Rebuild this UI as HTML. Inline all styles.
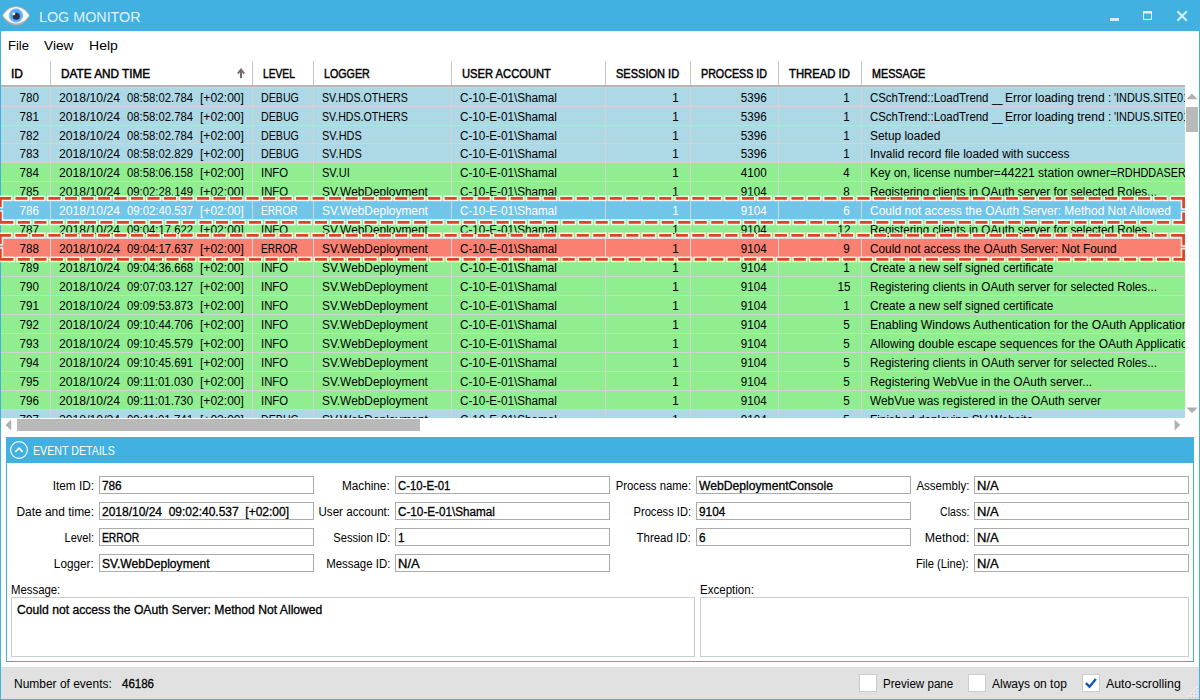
<!DOCTYPE html>
<html lang="en"><head><meta charset="utf-8"><title>Log Monitor</title>
<style>
*{margin:0;padding:0;box-sizing:border-box}
html,body{width:1200px;height:700px;overflow:hidden;background:#fff}
body{font-family:"Liberation Sans",sans-serif;font-size:12px;color:#000}
#win{position:absolute;left:0;top:0;width:1200px;height:700px;background:#fff;overflow:hidden}
#win>*{position:absolute}
.bd{background:#41b1e1;z-index:5}
.x{position:absolute;display:inline-block;white-space:pre;transform-origin:0 0;line-height:14px}
.x.ra{transform-origin:100% 0}
.v,.b{-webkit-text-stroke:0.3px currentColor}
.h{-webkit-text-stroke:0.45px currentColor}
#tb{left:0;top:0;width:1200px;height:31px;background:#41b1e1}
#tb .ttl{left:39px;top:7.5px;font-size:14.7px;color:rgba(255,255,255,.86);line-height:18px}
#tb svg{position:absolute}
#menu{left:1px;top:31px;width:1198px;height:30px}
#menu .x{top:7px;font-size:13.7px;line-height:16px}
#hdr{left:0;top:61px;width:1185px;height:26px;border-bottom:2px solid #b6b6b6;overflow:hidden}
#hdr .h{top:6px;color:#000;margin-left:0.4px}
#hdr .hs{position:absolute;top:0;width:1px;height:24px;background:#c4c4c4}
#hdr .sort{position:absolute;left:235.9px;top:6.6px}
#grid{left:0;top:88px;width:1185px;height:330px;overflow:hidden;background:#d3d3d3}
#hb2{left:0;top:87px;width:1185px;height:1px;background:#d3d3d3;z-index:2}
.r{position:absolute;left:0;width:1185px;overflow:hidden}
.r.d{background:#add8e6}.r.n{background:#90ee90}.r.e{background:#fa8072}.r.s{background:#70c5e9;color:#fff}
.c{top:2.7px}
.c0{right:1145.7px}.c1{left:59px}.c1b{left:127.3px}.c1c{left:199.9px}.c2{left:261px}.c3{left:322px}.c4{left:460px}
.c5{right:506px}.c6{right:418px}.c7{right:335px}.c8{left:870px}
.gs{position:absolute;top:0;width:1px;height:330px;background:#d3d3d3}
#vsb{left:1185px;top:88px;width:14px;height:330px}
#hsb{left:1px;top:417px;width:1198px;height:16px}
#vsb>*,#hsb>*{position:absolute}
.th{background:#b9b9b9}
#ann{left:0;top:190px;pointer-events:none;z-index:6}
#det{left:6px;top:437px;width:1188px;height:225px;border:1px solid #41b1e1;background:#fff}
#det>*{position:absolute}
#det .dh{left:-1px;top:-1px;width:1188px;height:26px;background:#41b1e1}
#det .dh svg{position:absolute}
#det .dt{left:27px;top:6px;color:#fff;font-size:12.3px;line-height:16px}
#det .t{width:215px;height:18px;border:1px solid #ababab;background:#fff;overflow:hidden}
#det .t .v{left:2px;top:2px}
#det .m{border:1px solid #ccc;background:#fff}
#det .m .v{left:5.2px;top:5px}
#sb{left:1px;top:667px;width:1198px;height:32px;background:#e1e1e1}
#sb>*{position:absolute}
#sb .x{top:10px}
#sb .cb{top:7px;width:18px;height:18px;background:#fff;border:1px solid #ccc}
#sb .cb svg{position:absolute;left:0;top:0}

</style></head>
<body>
<div id="win">
<div id="tb">
<svg id="eye" style="left:1px;top:5px" width="30" height="22" viewBox="0 0 30 22">
<defs><radialGradient id="ir" cx="50%" cy="50%" r="50%"><stop offset="0" stop-color="#4f9df0"/><stop offset="0.7" stop-color="#58a8f2"/><stop offset="1" stop-color="#86c8fa"/></radialGradient></defs>
<path d="M0.9 10.6C5 3.6 10 1.3 15 1.3S25.2 3.8 29.1 10.6C25.2 17.4 20 20.4 15 20.4S5 17.4 0.9 10.6Z" fill="#b5b0ac"/>
<path d="M2 10.5C5.8 4.4 10.4 2.2 15 2.2S24.4 4.6 28 10.5C24.4 16 19.6 18.4 15 18.4S5.8 16 2 10.5Z" fill="#fdfdfd"/>
<circle cx="15" cy="10.5" r="7.2" fill="url(#ir)"/>
<circle cx="15.3" cy="11.2" r="3.5" fill="#2a3052"/>
<circle cx="12.8" cy="8.9" r="1.4" fill="#fff"/>
</svg>
<span class="x ttl" style="transform:scaleX(0.9752)">LOG MONITOR</span>
<svg style="left:1108px;top:8px" width="84" height="16" viewBox="0 0 84 16">
<rect x="2" y="10" width="9" height="3" fill="#fff" opacity="0.78"/>
<rect x="35.5" y="4" width="8" height="7.4" fill="none" stroke="#fff" stroke-width="1" opacity="0.85"/><rect x="35" y="3.3" width="9" height="2.2" fill="#fff" opacity="0.8"/>
<path d="M69.4 3.3L78.8 12.8M78.8 3.3L69.4 12.8" stroke="#fff" stroke-width="2" fill="none" opacity="0.8"/>
</svg>
</div>
<div id="menu"><span class="x" style="left:7.199999999999999px;transform:scaleX(0.9487)">File</span><span class="x" style="left:43.1px;transform:scaleX(1.0028)">View</span><span class="x" style="left:88px;transform:scaleX(1.0258)">Help</span></div>
<div id="hdr">
<span class="x h" style="left:11px;transform:scaleX(0.9968)">ID</span><span class="x h" style="left:61px;transform:scaleX(0.9807)">DATE AND TIME</span><span class="x h" style="left:263px;transform:scaleX(0.8520)">LEVEL</span><span class="x h" style="left:324px;transform:scaleX(0.8913)">LOGGER</span><span class="x h" style="left:462px;transform:scaleX(0.9325)">USER ACCOUNT</span><span class="x h" style="left:616px;transform:scaleX(0.9194)">SESSION ID</span><span class="x h" style="left:701px;transform:scaleX(0.8922)">PROCESS ID</span><span class="x h" style="left:789px;transform:scaleX(0.9416)">THREAD ID</span><span class="x h" style="left:872px;transform:scaleX(0.8962)">MESSAGE</span>
<i class="hs" style="left:50px"></i><i class="hs" style="left:252px"></i><i class="hs" style="left:313px"></i><i class="hs" style="left:451px"></i><i class="hs" style="left:605px"></i><i class="hs" style="left:690px"></i><i class="hs" style="left:778px"></i><i class="hs" style="left:861px"></i><svg class="sort" width="10" height="11" viewBox="0 0 10 11"><path d="M5 10.1V2" fill="none" stroke="#7a6a6c" stroke-width="2.1"/><path d="M1.7 5.5Q3.7 3.7 5 1.3Q6.3 3.7 8.3 5.5" fill="none" stroke="#7a6a6c" stroke-width="1.8" stroke-linejoin="round"/></svg>
</div>
<div id="grid">
<div class="r d" style="top:0px;height:18px"><span class="x c c0 ra" style="transform:scaleX(0.9688)">780</span><span class="x c c1" style="transform:scaleX(1.0173)">2018/10/24</span><span class="x c c1b" style="transform:scaleX(0.9421)">08:58:02.784</span><span class="x c c1c" style="transform:scaleX(1.0048)">[+02:00]</span><span class="x c c2" style="transform:scaleX(0.8869)">DEBUG</span><span class="x c c3" style="transform:scaleX(0.8855)">SV.HDS.OTHERS</span><span class="x c c4" style="transform:scaleX(0.9756)">C-10-E-01\Shamal</span><span class="x c c5 ra" style="transform:scaleX(0.9673)">1</span><span class="x c c6 ra" style="transform:scaleX(0.9690)">5396</span><span class="x c c7 ra" style="transform:scaleX(0.9673)">1</span><span class="x c c8"><span class="x" style="left:0.00px;transform:scaleX(0.9514)">CSchTrend::LoadTrend </span><span class="x" style="left:121.65px;transform:scaleX(0.7939)">__ </span><span class="x" style="left:134.89px;transform:scaleX(1.0019)">Error loading trend : </span><span class="x" style="left:244.49px;transform:scaleX(0.9061)">'INDUS.SITE01.TREND'</span></span></div>
<div class="r d" style="top:19px;height:18px"><span class="x c c0 ra" style="transform:scaleX(0.9688)">781</span><span class="x c c1" style="transform:scaleX(1.0173)">2018/10/24</span><span class="x c c1b" style="transform:scaleX(0.9421)">08:58:02.784</span><span class="x c c1c" style="transform:scaleX(1.0048)">[+02:00]</span><span class="x c c2" style="transform:scaleX(0.8869)">DEBUG</span><span class="x c c3" style="transform:scaleX(0.8855)">SV.HDS.OTHERS</span><span class="x c c4" style="transform:scaleX(0.9756)">C-10-E-01\Shamal</span><span class="x c c5 ra" style="transform:scaleX(0.9673)">1</span><span class="x c c6 ra" style="transform:scaleX(0.9690)">5396</span><span class="x c c7 ra" style="transform:scaleX(0.9673)">1</span><span class="x c c8"><span class="x" style="left:0.00px;transform:scaleX(0.9514)">CSchTrend::LoadTrend </span><span class="x" style="left:121.65px;transform:scaleX(0.7939)">__ </span><span class="x" style="left:134.89px;transform:scaleX(1.0019)">Error loading trend : </span><span class="x" style="left:244.49px;transform:scaleX(0.9061)">'INDUS.SITE01.TREND'</span></span></div>
<div class="r d" style="top:38px;height:17px"><span class="x c c0 ra" style="transform:scaleX(0.9688)">782</span><span class="x c c1" style="transform:scaleX(1.0173)">2018/10/24</span><span class="x c c1b" style="transform:scaleX(0.9421)">08:58:02.784</span><span class="x c c1c" style="transform:scaleX(1.0048)">[+02:00]</span><span class="x c c2" style="transform:scaleX(0.8869)">DEBUG</span><span class="x c c3" style="transform:scaleX(0.9120)">SV.HDS</span><span class="x c c4" style="transform:scaleX(0.9756)">C-10-E-01\Shamal</span><span class="x c c5 ra" style="transform:scaleX(0.9673)">1</span><span class="x c c6 ra" style="transform:scaleX(0.9690)">5396</span><span class="x c c7 ra" style="transform:scaleX(0.9673)">1</span><span class="x c c8" style="transform:scaleX(0.9935)">Setup loaded</span></div>
<div class="r d" style="top:56px;height:18px"><span class="x c c0 ra" style="transform:scaleX(0.9688)">783</span><span class="x c c1" style="transform:scaleX(1.0173)">2018/10/24</span><span class="x c c1b" style="transform:scaleX(0.9421)">08:58:02.829</span><span class="x c c1c" style="transform:scaleX(1.0048)">[+02:00]</span><span class="x c c2" style="transform:scaleX(0.8869)">DEBUG</span><span class="x c c3" style="transform:scaleX(0.9120)">SV.HDS</span><span class="x c c4" style="transform:scaleX(0.9756)">C-10-E-01\Shamal</span><span class="x c c5 ra" style="transform:scaleX(0.9673)">1</span><span class="x c c6 ra" style="transform:scaleX(0.9690)">5396</span><span class="x c c7 ra" style="transform:scaleX(0.9673)">1</span><span class="x c c8" style="transform:scaleX(0.9904)">Invalid record file loaded with success</span></div>
<div class="r n" style="top:75px;height:18px"><span class="x c c0 ra" style="transform:scaleX(0.9688)">784</span><span class="x c c1" style="transform:scaleX(1.0173)">2018/10/24</span><span class="x c c1b" style="transform:scaleX(0.9421)">08:58:06.158</span><span class="x c c1c" style="transform:scaleX(1.0048)">[+02:00]</span><span class="x c c2" style="transform:scaleX(0.9441)">INFO</span><span class="x c c3" style="transform:scaleX(0.9212)">SV.UI</span><span class="x c c4" style="transform:scaleX(0.9756)">C-10-E-01\Shamal</span><span class="x c c5 ra" style="transform:scaleX(0.9673)">1</span><span class="x c c6 ra" style="transform:scaleX(0.9690)">4100</span><span class="x c c7 ra" style="transform:scaleX(0.9673)">4</span><span class="x c c8"><span class="x" style="left:0.00px;transform:scaleX(0.9873)">Key on, license number=</span><span class="x" style="left:130.75px;transform:scaleX(1.0089)">44221 station owner=</span><span class="x" style="left:246.86px;transform:scaleX(0.9044)">RDHDDASERV</span></span></div>
<div class="r n" style="top:94px;height:18px"><span class="x c c0 ra" style="transform:scaleX(0.9688)">785</span><span class="x c c1" style="transform:scaleX(1.0173)">2018/10/24</span><span class="x c c1b" style="transform:scaleX(0.9421)">09:02:28.149</span><span class="x c c1c" style="transform:scaleX(1.0048)">[+02:00]</span><span class="x c c2" style="transform:scaleX(0.9441)">INFO</span><span class="x c c3" style="transform:scaleX(0.9924)">SV.WebDeployment</span><span class="x c c4" style="transform:scaleX(0.9756)">C-10-E-01\Shamal</span><span class="x c c5 ra" style="transform:scaleX(0.9673)">1</span><span class="x c c6 ra" style="transform:scaleX(0.9690)">9104</span><span class="x c c7 ra" style="transform:scaleX(0.9673)">8</span><span class="x c c8" style="transform:scaleX(0.9757)">Registering clients in OAuth server for selected Roles...</span></div>
<div class="r s" style="top:113px;height:18px"><span class="x c c0 ra" style="transform:scaleX(0.9688)">786</span><span class="x c c1" style="transform:scaleX(1.0173)">2018/10/24</span><span class="x c c1b" style="transform:scaleX(0.9421)">09:02:40.537</span><span class="x c c1c" style="transform:scaleX(1.0048)">[+02:00]</span><span class="x c c2" style="transform:scaleX(0.8460)">ERROR</span><span class="x c c3" style="transform:scaleX(0.9924)">SV.WebDeployment</span><span class="x c c4" style="transform:scaleX(0.9756)">C-10-E-01\Shamal</span><span class="x c c5 ra" style="transform:scaleX(0.9673)">1</span><span class="x c c6 ra" style="transform:scaleX(0.9690)">9104</span><span class="x c c7 ra" style="transform:scaleX(0.9673)">6</span><span class="x c c8" style="transform:scaleX(0.9979)">Could not access the OAuth Server: Method Not Allowed</span></div>
<div class="r n" style="top:132px;height:18px"><span class="x c c0 ra" style="transform:scaleX(0.9688)">787</span><span class="x c c1" style="transform:scaleX(1.0173)">2018/10/24</span><span class="x c c1b" style="transform:scaleX(0.9421)">09:04:17.622</span><span class="x c c1c" style="transform:scaleX(1.0048)">[+02:00]</span><span class="x c c2" style="transform:scaleX(0.9441)">INFO</span><span class="x c c3" style="transform:scaleX(0.9924)">SV.WebDeployment</span><span class="x c c4" style="transform:scaleX(0.9756)">C-10-E-01\Shamal</span><span class="x c c5 ra" style="transform:scaleX(0.9673)">1</span><span class="x c c6 ra" style="transform:scaleX(0.9690)">9104</span><span class="x c c7 ra" style="transform:scaleX(0.9684)">12</span><span class="x c c8" style="transform:scaleX(0.9757)">Registering clients in OAuth server for selected Roles...</span></div>
<div class="r e" style="top:151px;height:18px"><span class="x c c0 ra" style="transform:scaleX(0.9688)">788</span><span class="x c c1" style="transform:scaleX(1.0173)">2018/10/24</span><span class="x c c1b" style="transform:scaleX(0.9421)">09:04:17.637</span><span class="x c c1c" style="transform:scaleX(1.0048)">[+02:00]</span><span class="x c c2" style="transform:scaleX(0.8460)">ERROR</span><span class="x c c3" style="transform:scaleX(0.9924)">SV.WebDeployment</span><span class="x c c4" style="transform:scaleX(0.9756)">C-10-E-01\Shamal</span><span class="x c c5 ra" style="transform:scaleX(0.9673)">1</span><span class="x c c6 ra" style="transform:scaleX(0.9690)">9104</span><span class="x c c7 ra" style="transform:scaleX(0.9673)">9</span><span class="x c c8" style="transform:scaleX(0.9830)">Could not access the OAuth Server: Not Found</span></div>
<div class="r n" style="top:170px;height:18px"><span class="x c c0 ra" style="transform:scaleX(0.9688)">789</span><span class="x c c1" style="transform:scaleX(1.0173)">2018/10/24</span><span class="x c c1b" style="transform:scaleX(0.9421)">09:04:36.668</span><span class="x c c1c" style="transform:scaleX(1.0048)">[+02:00]</span><span class="x c c2" style="transform:scaleX(0.9441)">INFO</span><span class="x c c3" style="transform:scaleX(0.9924)">SV.WebDeployment</span><span class="x c c4" style="transform:scaleX(0.9756)">C-10-E-01\Shamal</span><span class="x c c5 ra" style="transform:scaleX(0.9673)">1</span><span class="x c c6 ra" style="transform:scaleX(0.9690)">9104</span><span class="x c c7 ra" style="transform:scaleX(0.9673)">1</span><span class="x c c8" style="transform:scaleX(0.9821)">Create a new self signed certificate</span></div>
<div class="r n" style="top:189px;height:18px"><span class="x c c0 ra" style="transform:scaleX(0.9688)">790</span><span class="x c c1" style="transform:scaleX(1.0173)">2018/10/24</span><span class="x c c1b" style="transform:scaleX(0.9421)">09:07:03.127</span><span class="x c c1c" style="transform:scaleX(1.0048)">[+02:00]</span><span class="x c c2" style="transform:scaleX(0.9441)">INFO</span><span class="x c c3" style="transform:scaleX(0.9924)">SV.WebDeployment</span><span class="x c c4" style="transform:scaleX(0.9756)">C-10-E-01\Shamal</span><span class="x c c5 ra" style="transform:scaleX(0.9673)">1</span><span class="x c c6 ra" style="transform:scaleX(0.9690)">9104</span><span class="x c c7 ra" style="transform:scaleX(0.9684)">15</span><span class="x c c8" style="transform:scaleX(0.9757)">Registering clients in OAuth server for selected Roles...</span></div>
<div class="r n" style="top:208px;height:18px"><span class="x c c0 ra" style="transform:scaleX(0.9688)">791</span><span class="x c c1" style="transform:scaleX(1.0173)">2018/10/24</span><span class="x c c1b" style="transform:scaleX(0.9421)">09:09:53.873</span><span class="x c c1c" style="transform:scaleX(1.0048)">[+02:00]</span><span class="x c c2" style="transform:scaleX(0.9441)">INFO</span><span class="x c c3" style="transform:scaleX(0.9924)">SV.WebDeployment</span><span class="x c c4" style="transform:scaleX(0.9756)">C-10-E-01\Shamal</span><span class="x c c5 ra" style="transform:scaleX(0.9673)">1</span><span class="x c c6 ra" style="transform:scaleX(0.9690)">9104</span><span class="x c c7 ra" style="transform:scaleX(0.9673)">1</span><span class="x c c8" style="transform:scaleX(0.9821)">Create a new self signed certificate</span></div>
<div class="r n" style="top:227px;height:18px"><span class="x c c0 ra" style="transform:scaleX(0.9688)">792</span><span class="x c c1" style="transform:scaleX(1.0173)">2018/10/24</span><span class="x c c1b" style="transform:scaleX(0.9421)">09:10:44.706</span><span class="x c c1c" style="transform:scaleX(1.0048)">[+02:00]</span><span class="x c c2" style="transform:scaleX(0.9441)">INFO</span><span class="x c c3" style="transform:scaleX(0.9924)">SV.WebDeployment</span><span class="x c c4" style="transform:scaleX(0.9756)">C-10-E-01\Shamal</span><span class="x c c5 ra" style="transform:scaleX(0.9673)">1</span><span class="x c c6 ra" style="transform:scaleX(0.9690)">9104</span><span class="x c c7 ra" style="transform:scaleX(0.9673)">5</span><span class="x c c8" style="transform:scaleX(1.0163)">Enabling Windows Authentication for the OAuth Application</span></div>
<div class="r n" style="top:246px;height:18px"><span class="x c c0 ra" style="transform:scaleX(0.9688)">793</span><span class="x c c1" style="transform:scaleX(1.0173)">2018/10/24</span><span class="x c c1b" style="transform:scaleX(0.9421)">09:10:45.579</span><span class="x c c1c" style="transform:scaleX(1.0048)">[+02:00]</span><span class="x c c2" style="transform:scaleX(0.9441)">INFO</span><span class="x c c3" style="transform:scaleX(0.9924)">SV.WebDeployment</span><span class="x c c4" style="transform:scaleX(0.9756)">C-10-E-01\Shamal</span><span class="x c c5 ra" style="transform:scaleX(0.9673)">1</span><span class="x c c6 ra" style="transform:scaleX(0.9690)">9104</span><span class="x c c7 ra" style="transform:scaleX(0.9673)">5</span><span class="x c c8" style="transform:scaleX(1.0022)">Allowing double escape sequences for the OAuth Application</span></div>
<div class="r n" style="top:265px;height:18px"><span class="x c c0 ra" style="transform:scaleX(0.9688)">794</span><span class="x c c1" style="transform:scaleX(1.0173)">2018/10/24</span><span class="x c c1b" style="transform:scaleX(0.9421)">09:10:45.691</span><span class="x c c1c" style="transform:scaleX(1.0048)">[+02:00]</span><span class="x c c2" style="transform:scaleX(0.9441)">INFO</span><span class="x c c3" style="transform:scaleX(0.9924)">SV.WebDeployment</span><span class="x c c4" style="transform:scaleX(0.9756)">C-10-E-01\Shamal</span><span class="x c c5 ra" style="transform:scaleX(0.9673)">1</span><span class="x c c6 ra" style="transform:scaleX(0.9690)">9104</span><span class="x c c7 ra" style="transform:scaleX(0.9673)">5</span><span class="x c c8" style="transform:scaleX(0.9757)">Registering clients in OAuth server for selected Roles...</span></div>
<div class="r n" style="top:284px;height:18px"><span class="x c c0 ra" style="transform:scaleX(0.9688)">795</span><span class="x c c1" style="transform:scaleX(1.0173)">2018/10/24</span><span class="x c c1b" style="transform:scaleX(0.9543)">09:11:01.030</span><span class="x c c1c" style="transform:scaleX(1.0048)">[+02:00]</span><span class="x c c2" style="transform:scaleX(0.9441)">INFO</span><span class="x c c3" style="transform:scaleX(0.9924)">SV.WebDeployment</span><span class="x c c4" style="transform:scaleX(0.9756)">C-10-E-01\Shamal</span><span class="x c c5 ra" style="transform:scaleX(0.9673)">1</span><span class="x c c6 ra" style="transform:scaleX(0.9690)">9104</span><span class="x c c7 ra" style="transform:scaleX(0.9673)">5</span><span class="x c c8" style="transform:scaleX(0.9850)">Registering WebVue in the OAuth server...</span></div>
<div class="r n" style="top:303px;height:18px"><span class="x c c0 ra" style="transform:scaleX(0.9688)">796</span><span class="x c c1" style="transform:scaleX(1.0173)">2018/10/24</span><span class="x c c1b" style="transform:scaleX(0.9543)">09:11:01.730</span><span class="x c c1c" style="transform:scaleX(1.0048)">[+02:00]</span><span class="x c c2" style="transform:scaleX(0.9441)">INFO</span><span class="x c c3" style="transform:scaleX(0.9924)">SV.WebDeployment</span><span class="x c c4" style="transform:scaleX(0.9756)">C-10-E-01\Shamal</span><span class="x c c5 ra" style="transform:scaleX(0.9673)">1</span><span class="x c c6 ra" style="transform:scaleX(0.9690)">9104</span><span class="x c c7 ra" style="transform:scaleX(0.9673)">5</span><span class="x c c8" style="transform:scaleX(0.9894)">WebVue was registered in the OAuth server</span></div>
<div class="r d" style="top:322px;height:18px"><span class="x c c0 ra" style="transform:scaleX(0.9688)">797</span><span class="x c c1" style="transform:scaleX(1.0173)">2018/10/24</span><span class="x c c1b" style="transform:scaleX(0.9543)">09:11:01.741</span><span class="x c c1c" style="transform:scaleX(1.0048)">[+02:00]</span><span class="x c c2" style="transform:scaleX(0.8869)">DEBUG</span><span class="x c c3" style="transform:scaleX(0.9924)">SV.WebDeployment</span><span class="x c c4" style="transform:scaleX(0.9756)">C-10-E-01\Shamal</span><span class="x c c5 ra" style="transform:scaleX(0.9673)">1</span><span class="x c c6 ra" style="transform:scaleX(0.9690)">9104</span><span class="x c c7 ra" style="transform:scaleX(0.9673)">5</span><span class="x c c8" style="transform:scaleX(0.9833)">Finished deploying SV Website</span></div>
<i class="gs" style="left:50px"></i><i class="gs" style="left:252px"></i><i class="gs" style="left:313px"></i><i class="gs" style="left:451px"></i><i class="gs" style="left:605px"></i><i class="gs" style="left:690px"></i><i class="gs" style="left:778px"></i><i class="gs" style="left:861px"></i>
</div>
<i id="hb2"></i>
<div id="vsb">
<svg style="left:1px;top:5px" width="12" height="7" viewBox="0 0 12 7"><path d="M0.4 6.2L6 0.6L11.6 6.2Z" fill="#b0b0b0"/></svg>
<i class="th" style="left:1px;top:19px;width:12px;height:25px"></i>
<svg style="left:1px;top:319.3px" width="12" height="7" viewBox="0 0 12 7"><path d="M0.4 0.6L6 6.2L11.6 0.6Z" fill="#b0b0b0"/></svg>
</div>
<div id="hsb">
<svg style="left:4.4px;top:2px" width="7" height="12" viewBox="0 0 7 12"><path d="M6.2 0.4L0.6 6L6.2 11.6Z" fill="#b0b0b0"/></svg>
<i class="th" style="left:16px;top:2px;width:403px;height:12px"></i>
<svg style="left:1172.5px;top:2px" width="7" height="12" viewBox="0 0 7 12"><path d="M0.6 0.4L6.2 6L0.6 11.6Z" fill="#b0b0b0"/></svg>
</div>
<svg id="ann" width="1185" height="80" viewBox="0 0 1185 80">
<g fill="none" stroke="#fff" stroke-opacity="0.82" stroke-width="5.8" stroke-linecap="butt">
<path d="M-2.60 8.4H1186" stroke-dasharray="15.10 1.41"/>
<path d="M-16.71 32.4H1186" stroke-dasharray="15.10 1.41"/>
<path d="M0.35 8.4V18.60M0.35 20.20V32.4M1183.6 8.4V19.80M1183.6 21.00V32.4"/>
<path d="M-2.60 45.4H1186" stroke-dasharray="15.10 1.41"/>
<path d="M-16.71 69.4H1186" stroke-dasharray="15.10 1.41"/>
<path d="M0.35 45.4V55.60M0.35 57.20V69.4M1183.6 45.4V56.80M1183.6 58.00V69.4"/>
</g>
<g fill="none" stroke="#dd4423" stroke-width="2.7">
<path d="M-1.1 8.4H1186" stroke-dasharray="12.1 4.41"/>
<path d="M-15.21 32.4H1186" stroke-dasharray="12.1 4.41"/>
<path d="M0.35 7.05V17.10M0.35 21.70V33.75M1183.6 7.05V18.30M1183.6 22.50V33.75"/>
<path d="M-1.1 45.4H1186" stroke-dasharray="12.1 4.41"/>
<path d="M-15.21 69.4H1186" stroke-dasharray="12.1 4.41"/>
<path d="M0.35 44.05V54.10M0.35 58.70V70.75M1183.6 44.05V55.30M1183.6 59.50V70.75"/>
</g>
</svg>
<div id="det">
<div class="dh"><svg width="20" height="20" viewBox="0 0 20 20" style="left:3px;top:3.3px"><circle cx="10" cy="10" r="8.4" fill="none" stroke="#fff" stroke-width="1.1"/><path d="M6.3 11.8L10 8.1L13.7 11.8" fill="none" stroke="#fff" stroke-width="1.7"/></svg><span class="x dt" style="transform:scaleX(0.8661)">EVENT DETAILS</span></div>
<span class="x l ra" style="right:1099px;top:41px;transform:scaleX(0.9848)">Item ID:</span><div class="t" style="left:92px;top:38px"><span class="x v" style="transform:scaleX(0.9833)">786</span></div>
<span class="x l ra" style="right:1099px;top:67px;transform:scaleX(0.9941)">Date and time:</span><div class="t" style="left:92px;top:64px"><span class="x v" style="transform:scaleX(0.9989)">2018/10/24&nbsp; 09:02:40.537&nbsp; [+02:00]</span></div>
<span class="x l ra" style="right:1099px;top:93px;transform:scaleX(0.9194)">Level:</span><div class="t" style="left:92px;top:90px"><span class="x v" style="transform:scaleX(0.8587)">ERROR</span></div>
<span class="x l ra" style="right:1099px;top:119px;transform:scaleX(0.9790)">Logger:</span><div class="t" style="left:92px;top:116px"><span class="x v" style="transform:scaleX(1.0073)">SV.WebDeployment</span></div>
<span class="x l ra" style="right:803px;top:41px;transform:scaleX(0.9812)">Machine:</span><div class="t" style="left:388px;top:38px"><span class="x v" style="transform:scaleX(0.9470)">C-10-E-01</span></div>
<span class="x l ra" style="right:803px;top:67px;transform:scaleX(0.9663)">User account:</span><div class="t" style="left:388px;top:64px"><span class="x v" style="transform:scaleX(0.9756)">C-10-E-01\Shamal</span></div>
<span class="x l ra" style="right:803px;top:93px;transform:scaleX(0.9300)">Session ID:</span><div class="t" style="left:388px;top:90px"><span class="x v" style="transform:scaleX(0.9818)">1</span></div>
<span class="x l ra" style="right:803px;top:119px;transform:scaleX(0.9527)">Message ID:</span><div class="t" style="left:388px;top:116px"><span class="x v" style="transform:scaleX(1.0848)">N/A</span></div>
<span class="x l ra" style="right:502px;top:41px;transform:scaleX(0.9413)">Process name:</span><div class="t" style="left:689px;top:38px"><span class="x v" style="transform:scaleX(1.0115)">WebDeploymentConsole</span></div>
<span class="x l ra" style="right:502px;top:67px;transform:scaleX(0.9263)">Process ID:</span><div class="t" style="left:689px;top:64px"><span class="x v" style="transform:scaleX(0.9835)">9104</span></div>
<span class="x l ra" style="right:502px;top:93px;transform:scaleX(0.9557)">Thread ID:</span><div class="t" style="left:689px;top:90px"><span class="x v" style="transform:scaleX(0.9818)">6</span></div>
<span class="x l ra" style="right:224px;top:41px;transform:scaleX(0.9555)">Assembly:</span><div class="t" style="left:967px;top:38px"><span class="x v" style="transform:scaleX(1.0848)">N/A</span></div>
<span class="x l ra" style="right:224px;top:67px;transform:scaleX(0.8765)">Class:</span><div class="t" style="left:967px;top:64px"><span class="x v" style="transform:scaleX(1.0848)">N/A</span></div>
<span class="x l ra" style="right:224px;top:93px;transform:scaleX(1.0285)">Method:</span><div class="t" style="left:967px;top:90px"><span class="x v" style="transform:scaleX(1.0848)">N/A</span></div>
<span class="x l ra" style="right:224px;top:119px;transform:scaleX(0.9296)">File (Line):</span><div class="t" style="left:967px;top:116px"><span class="x v" style="transform:scaleX(1.0848)">N/A</span></div>
<span class="x l" style="left:4px;top:144.7px;transform:scaleX(0.9470)">Message:</span><div class="m" style="left:4px;top:159px;width:684px;height:60px"><span class="x v" style="transform:scaleX(1.0129)">Could not access the OAuth Server: Method Not Allowed</span></div>
<span class="x l" style="left:693px;top:144.7px;transform:scaleX(0.9608)">Exception:</span><div class="m" style="left:693px;top:159px;width:489px;height:60px"></div>
</div>
<div id="sb">
<span class="x" style="left:13px;transform:scaleX(0.9976)">Number of events:</span><span class="x b" style="left:121px;transform:scaleX(0.9594)">46186</span><i class="cb" style="left:858px"></i><span class="x" style="left:882px;transform:scaleX(0.9663)">Preview pane</span><i class="cb" style="left:967px"></i><span class="x" style="left:991px;transform:scaleX(1.0016)">Always on top</span><i class="cb" style="left:1081px"><svg width="16" height="16" viewBox="0 0 16 16"><path d="M2.9 8.1L6.5 11.7L12.9 3.9" fill="none" stroke="#1058b2" stroke-width="2.4"/></svg></i><span class="x" style="left:1105px;transform:scaleX(1.0293)">Auto-scrolling</span><svg style="left:1185.5px;top:19px" width="12.4" height="12.4" viewBox="0 0 13 13"><g fill="#b9b9dc"><rect x="10.7" y="1.7" width="1.4" height="1.4"/><rect x="7.7" y="4.7" width="1.4" height="1.4"/><rect x="10.7" y="4.7" width="1.4" height="1.4"/><rect x="4.7" y="7.7" width="1.4" height="1.4"/><rect x="7.7" y="7.7" width="1.4" height="1.4"/><rect x="10.7" y="7.7" width="1.4" height="1.4"/><rect x="1.7" y="10.7" width="1.4" height="1.4"/><rect x="4.7" y="10.7" width="1.4" height="1.4"/><rect x="7.7" y="10.7" width="1.4" height="1.4"/><rect x="10.7" y="10.7" width="1.4" height="1.4"/></g><g fill="#fafafa"><rect x="10" y="1" width="1.4" height="1.4"/><rect x="7" y="4" width="1.4" height="1.4"/><rect x="10" y="4" width="1.4" height="1.4"/><rect x="4" y="7" width="1.4" height="1.4"/><rect x="7" y="7" width="1.4" height="1.4"/><rect x="10" y="7" width="1.4" height="1.4"/><rect x="1" y="10" width="1.4" height="1.4"/><rect x="4" y="10" width="1.4" height="1.4"/><rect x="7" y="10" width="1.4" height="1.4"/><rect x="10" y="10" width="1.4" height="1.4"/></g></svg>
</div>
<i class="bd" style="left:0;top:0;width:1px;height:700px"></i><i class="bd" style="left:1199px;top:0;width:1px;height:700px"></i><i class="bd" style="left:0;top:699px;width:1200px;height:1px"></i>
</div>
</body></html>
